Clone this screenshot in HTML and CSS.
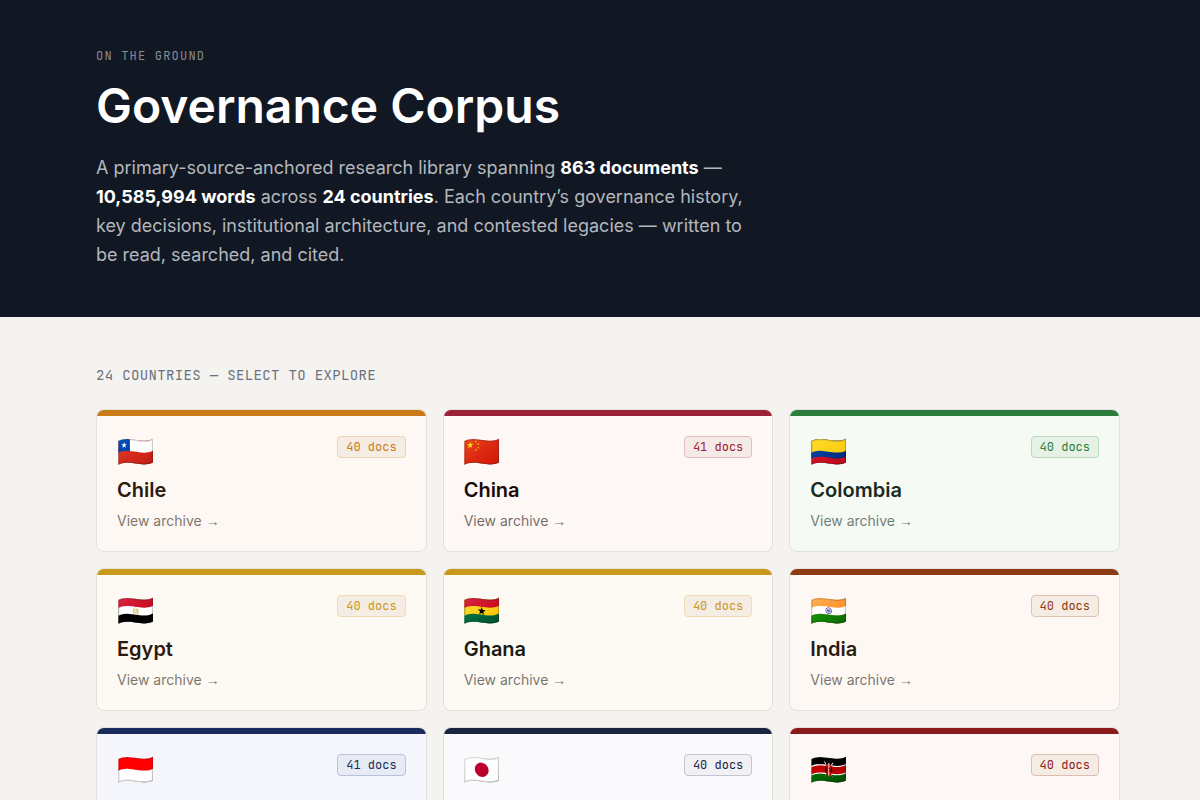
FILE: index.html
```html
<!DOCTYPE html>
<html lang="en">
<head>
    <meta charset="UTF-8">
    <meta name="viewport" content="width=device-width, initial-scale=1.0">
    <title>Governance Corpus</title>
    <link rel="stylesheet" href="styles.css">
</head>
<body>
    <header class="hero">
        <div class="container">
            <p class="eyebrow">On the Ground</p>
            <h1>Governance Corpus</h1>
            <p class="intro">A primary-source-anchored research library spanning <strong>863 documents</strong> — <strong>10,585,994 words</strong> across <strong>24 countries</strong>. Each country’s governance history, key decisions, institutional architecture, and contested legacies — written to be read, searched, and cited.</p>
        </div>
    </header>

    <main class="container">
        <h2 class="section-label">24 countries — select to explore</h2>
        <div class="grid">
            <a class="card chile" href="#chile">
                <span class="card-top"><span class="flag">🇨🇱</span><span class="badge">40 docs</span></span>
                <span class="name">Chile</span>
                <span class="more">View archive <span class="arrow">→</span></span>
            </a>
            <a class="card china" href="#china">
                <span class="card-top"><span class="flag">🇨🇳</span><span class="badge">41 docs</span></span>
                <span class="name">China</span>
                <span class="more">View archive <span class="arrow">→</span></span>
            </a>
            <a class="card colombia" href="#colombia">
                <span class="card-top"><span class="flag">🇨🇴</span><span class="badge">40 docs</span></span>
                <span class="name">Colombia</span>
                <span class="more">View archive <span class="arrow">→</span></span>
            </a>
            <a class="card egypt" href="#egypt">
                <span class="card-top"><span class="flag">🇪🇬</span><span class="badge">40 docs</span></span>
                <span class="name">Egypt</span>
                <span class="more">View archive <span class="arrow">→</span></span>
            </a>
            <a class="card ghana" href="#ghana">
                <span class="card-top"><span class="flag">🇬🇭</span><span class="badge">40 docs</span></span>
                <span class="name">Ghana</span>
                <span class="more">View archive <span class="arrow">→</span></span>
            </a>
            <a class="card india" href="#india">
                <span class="card-top"><span class="flag">🇮🇳</span><span class="badge">40 docs</span></span>
                <span class="name">India</span>
                <span class="more">View archive <span class="arrow">→</span></span>
            </a>
            <a class="card indonesia" href="#indonesia">
                <span class="card-top"><span class="flag">🇮🇩</span><span class="badge">41 docs</span></span>
                <span class="name">Indonesia</span>
                <span class="more">View archive <span class="arrow">→</span></span>
            </a>
            <a class="card japan" href="#japan">
                <span class="card-top"><span class="flag">🇯🇵</span><span class="badge">40 docs</span></span>
                <span class="name">Japan</span>
                <span class="more">View archive <span class="arrow">→</span></span>
            </a>
            <a class="card kenya" href="#kenya">
                <span class="card-top"><span class="flag">🇰🇪</span><span class="badge">40 docs</span></span>
                <span class="name">Kenya</span>
                <span class="more">View archive <span class="arrow">→</span></span>
            </a>
        </div>
    </main>
</body>
</html>
```
FILE: styles.css
```css
* {
    box-sizing: border-box;
}
html {
    scrollbar-width: none;
}
body {
    margin: 0;
    background-color: #f4f3ef;
    color: #111824;
    font-family: Inter, "Liberation Sans", sans-serif;
}
.container {
    max-width: 1120px;
    margin: 0 auto;
    padding: 0 40px 0 56px;
}
.hero {
    padding: 48px 0;
    background-color: #111824;
    color: #ffffff;
}
.eyebrow {
    margin: 0 0 12px;
    color: #888b91;
    font-family: "JetBrains Mono", "DejaVu Sans Mono", monospace;
    font-size: 12px;
    line-height: 16px;
    letter-spacing: 0.1em;
    text-transform: uppercase;
}
h1 {
    margin: 0 0 18px;
    font-size: 48px;
    font-weight: 600;
    line-height: 59px;
}
.intro {
    max-width: 672px;
    margin: 0;
    color: #b4b7bc;
    font-size: 18px;
    line-height: 29px;
}
.intro strong {
    color: #ffffff;
    font-weight: 700;
}
.section-label {
    margin: 48px 0 24px;
    color: #6b7280;
    font-family: "JetBrains Mono", "DejaVu Sans Mono", monospace;
    font-size: 14px;
    font-weight: 400;
    line-height: 20px;
    letter-spacing: 0.025em;
    text-transform: uppercase;
}
.grid {
    display: grid;
    grid-template-columns: repeat(3, 1fr);
    gap: 16px;
    padding-bottom: 48px;
}
.card {
    display: flex;
    flex-direction: column;
    padding: 0 20px 20px;
    border: 1px solid rgba(0, 0, 0, 0.07);
    border-radius: 8px;
    overflow: hidden;
    background-color: var(--tint);
    background-clip: padding-box;
    color: var(--ink);
    text-decoration: none;
}
.card::before {
    content: "";
    height: 6px;
    margin: 0 -20px 20px;
    background-color: var(--accent);
}
.card-top {
    display: flex;
    justify-content: space-between;
    align-items: flex-start;
}
.flag {
    font-family: "Noto Color Emoji", sans-serif;
    font-size: 30px;
    line-height: 32px;
}
.badge {
    padding: 2px 8px;
    border: 1px solid var(--badge-line);
    border-radius: 4px;
    background-color: var(--badge);
    color: var(--accent);
    font-family: "JetBrains Mono", "DejaVu Sans Mono", monospace;
    font-size: 12px;
    line-height: 16px;
}
.name {
    margin: 8px 0 6px;
    font-size: 20px;
    font-weight: 600;
    line-height: 29px;
}
.more {
    font-size: 14px;
    line-height: 20px;
    opacity: 0.6;
}
.arrow {
    font-family: "Liberation Sans", sans-serif;
}

/* country colours */
.chile {
    --accent: #c97b1a;
    --tint: #fdf8f4;
    --ink: #2c1a0e;
    --badge: #f5ece3;
    --badge-line: #eed5b3;
}
.china {
    --accent: #9b2335;
    --tint: #fdf8f6;
    --ink: #1a0a0a;
    --badge: #f5ebe6;
    --badge-line: #e4bcc0;
}
.colombia {
    --accent: #2a7d3a;
    --tint: #f5faf5;
    --ink: #1a2a1e;
    --badge: #e6f2e6;
    --badge-line: #b9d8be;
}
.egypt {
    --accent: #c8991a;
    --tint: #fdfaf4;
    --ink: #2c1a0e;
    --badge: #f5ece3;
    --badge-line: #eedcb3;
}
.ghana {
    --accent: #c8991a;
    --tint: #fdfaf4;
    --ink: #1a1a14;
    --badge: #f5ece4;
    --badge-line: #eedcb3;
}
.india {
    --accent: #8b3a14;
    --tint: #fdf8f4;
    --ink: #2c1a10;
    --badge: #f5ece3;
    --badge-line: #dfc4b6;
}
.indonesia {
    --accent: #1a2c5b;
    --tint: #f5f6fb;
    --ink: #0f1a33;
    --badge: #e6ebf5;
    --badge-line: #b9c2d6;
}
.japan {
    --accent: #1a2540;
    --tint: #fafafc;
    --ink: #111824;
    --badge: #f0f0f5;
    --badge-line: #c2c4d0;
}
.kenya {
    --accent: #8b1a1a;
    --tint: #fdf8f5;
    --ink: #1a0f0a;
    --badge: #f5ece4;
    --badge-line: #dfbcb6;
}
```
